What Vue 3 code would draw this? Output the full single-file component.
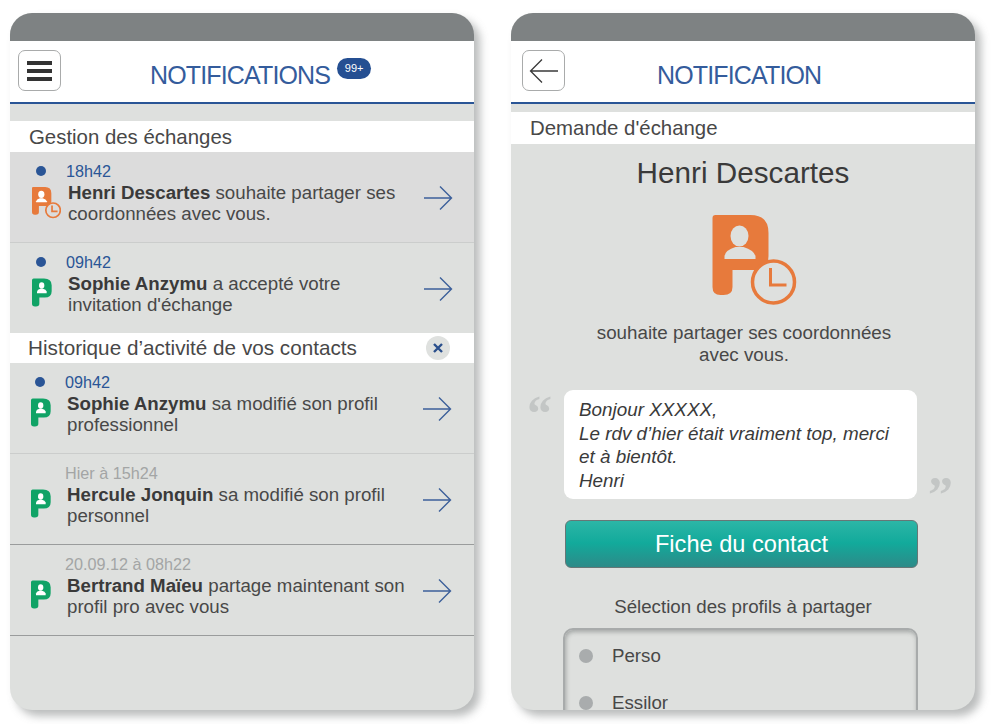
<script setup>
const exchanges = [
  { id: 1, time: '18h42', name: 'Henri Descartes', text: ' souhaite partager ses coordonnées avec vous.', pending: true, unread: true, tone: 'first light' },
  { id: 2, time: '09h42', name: 'Sophie Anzymu', text: ' a accepté votre invitation d\'échange', unread: true, tone: 'plain' }
];

const history = [
  { id: 3, time: '09h42', name: 'Sophie Anzymu', text: ' sa modifié son profil professionnel', unread: true, tone: 'light' },
  { id: 4, time: 'Hier à 15h24', name: 'Hercule Jonquin', text: ' sa modifié son profil personnel', tone: 'dark' },
  { id: 5, time: '20.09.12 à 08h22', name: 'Bertrand Maïeu', text: ' partage maintenant son profil pro avec vous', tone: 'dark' }
];

const groups = [
  { id: 'exchanges', title: 'Gestion des échanges', items: exchanges },
  { id: 'history', title: 'Historique d’activité de vos contacts', items: history, closable: true }
];
</script>

<template>
  <div class="page">
    <section class="phone">
      <div class="status"></div>
      <header class="head">
        <button class="nav-btn menu-btn"><i></i><i></i><i></i></button>
        <h1 class="title title-list">NOTIFICATIONS</h1>
        <span class="badge">99+</span>
      </header>
      <div class="list-body">
        <div v-for="group in groups" :key="group.id" :class="['group', group.id]">
          <div class="section">
            <span>{{ group.title }}</span>
            <span v-if="group.closable" class="close">
              <svg width="12" height="12" viewBox="0 0 12 12"><path d="M2 2l8 8M10 2l-8 8" stroke="#2a4f8c" stroke-width="2.4" fill="none" /></svg>
            </span>
          </div>
          <article v-for="item in group.items" :key="item.id" :class="['item', item.tone]">
            <div class="marks">
              <span :class="['dot', item.unread && 'on']"></span>
              <svg v-if="item.pending" class="p-icon" viewBox="0 0 84 92">
                <path fill="#e77a3c" d="M3 0H38Q56 0 56 18V41Q56 55 42 55H20V72Q20 80 11 80H8Q0 80 0 72V3Q0 0 3 0Z" />
                <ellipse fill="#fff" cx="27" cy="21" rx="9" ry="10.5" />
                <path fill="#fff" d="M12 44V41Q13 35 23 32H31Q41 35 43 41V44Z" />
                <circle cx="61" cy="67" r="21" fill="#dcdcdc" stroke="#e77a3c" stroke-width="5" />
                <path d="M58 53V70H74" fill="none" stroke="#e77a3c" stroke-width="5" />
              </svg>
              <svg v-else class="p-icon green" viewBox="0 0 60 84">
                <path fill="#10a366" d="M5 0H36Q59 0 59 20V38Q59 57 38 57H22V76Q22 84 12 84H9Q0 84 0 76V5Q0 0 5 0Z" />
                <ellipse fill="#fff" cx="29" cy="21" rx="8" ry="9.5" />
                <path fill="#fff" d="M15 44V39Q16 33 25 31H33Q42 33 44 39V44Z" />
              </svg>
            </div>
            <div class="copy">
              <time :class="['time', item.unread && 'fresh']">{{ item.time }}</time>
              <p class="msg"><strong>{{ item.name }}</strong>{{ item.text }}</p>
            </div>
            <svg class="arrow" width="30" height="26" viewBox="0 0 30 26">
              <path d="M1 13H28M17 1.5L28.500 13L17 24.500" fill="none" stroke="#3c5f9a" stroke-width="1.4" />
            </svg>
          </article>
        </div>
      </div>
    </section>

    <section class="phone">
      <div class="status"></div>
      <header class="head">
        <button class="nav-btn back-btn">
          <svg width="30" height="26" viewBox="0 0 30 26">
            <path d="M29 13H2M13 1.500L1.500 13L13 24.500" fill="none" stroke="#3a3a3a" stroke-width="1.3" />
          </svg>
        </button>
        <h1 class="title title-detail">NOTIFICATION</h1>
      </header>
      <div class="detail-body">
        <div class="section section-detail">Demande d'échange</div>
        <h2 class="who">Henri Descartes</h2>
        <svg class="big-icon" width="85" height="92" viewBox="0 0 84 92">
          <path fill="#e77a3c" d="M3 0H38Q56 0 56 18V41Q56 55 42 55H20V72Q20 80 11 80H8Q0 80 0 72V3Q0 0 3 0Z" />
          <ellipse fill="#dee0de" cx="27" cy="21" rx="9" ry="10.500" />
          <path fill="#dee0de" d="M12 44V41Q13 35 23 32H31Q41 35 43 41V44Z" />
          <circle cx="61" cy="67" r="21" fill="#dee0de" stroke="#e77a3c" stroke-width="3.500" />
          <path d="M58 53V70H74" fill="none" stroke="#e77a3c" stroke-width="3" />
        </svg>
        <p class="wish">souhaite partager ses coordonnées<br />avec vous.</p>
        <div class="quote-row">
          <span class="quote open">“</span>
          <blockquote class="bubble">Bonjour XXXXX,<br />Le rdv d’hier était vraiment top, merci<br />et à bientôt.<br />Henri</blockquote>
          <span class="quote close-quote">”</span>
        </div>
        <button class="contact-btn">Fiche du contact</button>
        <p class="pick">Sélection des profils à partager</p>
        <div class="profiles">
          <div class="profile"><span class="radio"></span>Perso</div>
          <div class="profile"><span class="radio"></span>Essilor</div>
        </div>
      </div>
    </section>
  </div>
</template>

<style>
html, body {
  margin: 0;
  background: #fff;
}
</style>

<style scoped>
.page {
  display: flex;
  gap: 37px;
  width: 992px;
  height: 724px;
  padding: 13px 0 0 10px;
  box-sizing: border-box;
  overflow: hidden;
  font-family: "Liberation Sans", Arial, sans-serif;
  color: #484848;
}

.phone {
  width: 464px;
  height: 697px;
  display: flex;
  flex-direction: column;
  border-radius: 22px;
  overflow: hidden;
  background: #dee0de;
  box-shadow: 6px 6px 9px rgba(90, 95, 95, 0.42);
}

.status {
  height: 28px;
  flex: none;
  background: #7e8283;
}

.head {
  height: 61px;
  flex: none;
  display: flex;
  align-items: flex-start;
  background: #fff;
  border-bottom: 2px solid #2a5596;
}

.nav-btn {
  width: 43px;
  height: 41px;
  margin-top: 9px;
  padding: 0;
  box-sizing: border-box;
  display: flex;
  flex-direction: column;
  align-items: center;
  justify-content: center;
  gap: 4px;
  background: #fff;
  border: 1px solid #a9abab;
  border-radius: 7px;
}

.menu-btn {
  margin-left: 8px;
}

.menu-btn i {
  display: block;
  width: 25px;
  height: 4px;
  background: #333;
}

.back-btn {
  margin-left: 11px;
}

.title {
  margin: 20px 0 0;
  font-size: 25px;
  line-height: 29px;
  font-weight: 400;
  letter-spacing: -0.85px;
  color: #345c9c;
}

.title-list {
  margin-left: 89px;
}

.title-detail {
  margin-left: 92px;
}

.badge {
  margin: 17px 0 0 7px;
  width: 34px;
  height: 21px;
  border-radius: 11px;
  background: #254f92;
  color: #fff;
  font-size: 11px;
  line-height: 21px;
  text-align: center;
}

.list-body {
  padding-top: 17px;
}

.section {
  height: 31px;
  box-sizing: border-box;
  padding: 0 24px 0 19px;
  display: flex;
  align-items: center;
  justify-content: space-between;
  background: #fff;
  font-size: 20.4px;
}

.exchanges .section {
  padding-top: 2px;
}

.history .section {
  height: 30px;
  padding-left: 18px;
  font-size: 20.7px;
}

.close {
  width: 24px;
  height: 24px;
  display: flex;
  align-items: center;
  justify-content: center;
  border-radius: 50%;
  background: #dfe1df;
}

.item {
  height: 81px;
  padding: 9px 21px 0 21px;
  display: flex;
  background: #dee0de;
}

.item.first {
  background: #dcdcdc;
}

.item.light {
  border-bottom: 1px solid #cbcdcc;
}

.item.dark {
  border-bottom: 1px solid #9a9c9c;
}

.history .item {
  padding-left: 20px;
}

.marks {
  width: 37px;
  flex: none;
  display: flex;
  flex-direction: column;
}

.dot {
  width: 10px;
  height: 10px;
  margin: 5px 0 11px 5px;
  border-radius: 50%;
}

.dot.on {
  background: #2a5596;
}

.p-icon {
  width: 29px;
  height: 32px;
  margin-left: 1px;
}

.p-icon.green {
  width: 20px;
  height: 29px;
}

.copy {
  width: 355px;
  flex: none;
}

.time {
  display: block;
  margin-left: -2px;
  font-size: 16.2px;
  line-height: 20.500px;
  color: #a3a5a5;
}

.time.fresh {
  color: #2a5596;
}

.msg {
  margin: 0;
  max-width: 345px;
  font-size: 18.7px;
  line-height: 21.500px;
}

.msg strong {
  color: #3a3a3a;
}

.arrow {
  flex: none;
  margin: 24px 0 0;
}

.section-detail {
  margin-top: 8px;
  height: 32px;
  padding-left: 19px;
  justify-content: flex-start;
}

.detail-body {
  display: flex;
  flex-direction: column;
  align-items: center;
}

.detail-body .section {
  align-self: stretch;
}

.who {
  margin: 12px 0 0;
  font-size: 29.7px;
  line-height: 34px;
  font-weight: 400;
  color: #3a3a3a;
}

.big-icon {
  margin-top: 25px;
  margin-left: 22px;
}

.wish {
  margin: 15px 0 0;
  padding-left: 2px;
  font-size: 18.8px;
  line-height: 22px;
  text-align: center;
}

.quote-row {
  align-self: stretch;
  display: grid;
  grid-template-columns: 53px 353px 58px;
  margin-top: 24px;
}

.quote {
  font-family: "Liberation Serif", serif;
  font-weight: 700;
  font-size: 50px;
  line-height: 46px;
  color: #c3c6c5;
}

.open {
  padding-left: 16px;
}

.close-quote {
  align-self: end;
  padding-left: 11px;
  margin-bottom: -18px;
}

.bubble {
  margin: 0;
  height: 109px;
  padding: 8px 15px;
  box-sizing: border-box;
  background: #fff;
  border-radius: 9px;
  font-style: italic;
  font-size: 18.85px;
  line-height: 23.500px;
  color: #3a3a3a;
}

.contact-btn {
  width: 353px;
  height: 48px;
  margin: 21px 0 0 -3px;
  padding: 1px 0 0;
  border: 1px solid #667776;
  border-radius: 6px;
  background: linear-gradient(#2cb6a6, #12aa9b 48%, #2d8a88);
  color: #fff;
  font-family: inherit;
  font-size: 23.6px;
}

.pick {
  margin: 27px 0 0;
  font-size: 18.7px;
  line-height: 24px;
}

.profiles {
  align-self: flex-start;
  width: 355px;
  height: 110px;
  margin: 9px 0 0 52px;
  box-sizing: border-box;
  padding: 2px 14px;
  border: 2px solid #a8abab;
  border-radius: 10px;
  box-shadow: inset 1px 2px 4px rgba(90, 95, 95, 0.45);
}

.profile {
  height: 47px;
  display: flex;
  align-items: center;
  gap: 19px;
  font-size: 18.7px;
}

.radio {
  width: 14px;
  height: 14px;
  border-radius: 50%;
  background: #a9acad;
}
</style>
